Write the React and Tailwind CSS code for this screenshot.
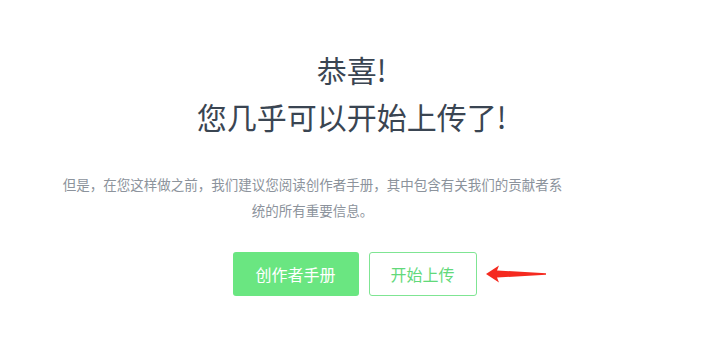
import React from 'react';

const Arrow = () => (
  <svg width="62" height="20" viewBox="0 0 62 20" className="absolute left-full top-1/2 -translate-y-1/2 ml-[8px]">
    <polygon points="1,10 14,1.5 12,6.5 61,9.2 61,10.8 12,13.5 14,18.5" fill="#f52a1f" />
  </svg>
);

export default function App() {
  return (
    <div
      className="w-[713px] h-[347px] bg-white flex flex-col items-center"
      style={{ fontFamily: '"Noto Sans CJK SC", "Noto Sans", sans-serif' }}
    >
      <div className="mt-[46px] pr-[10px] text-center text-[30px] leading-[47px] text-[#3a4552]">
        <h1>恭喜!</h1>
        <h1>您几乎可以开始上传了!</h1>
      </div>

      <p className="mt-[31px] mr-[88px] w-[506px] text-center text-[13.5px] leading-[26px] text-[#8c939c]">
        但是，在您这样做之前，我们建议您阅读创作者手册，其中包含有关我们的贡献者系统的所有重要信息。
      </p>

      <div className="relative mt-[29px] mr-[4px] flex gap-[10px]">
        <button className="w-[126px] h-[44px] rounded-[3px] bg-[#6ae681] text-white text-[16px]">
          创作者手册
        </button>
        <button className="w-[108px] h-[44px] rounded-[3px] border border-[#7fe593] bg-white text-[#62d97a] text-[16px]">
          开始上传
        </button>
        <Arrow />
      </div>
    </div>
  );
}
